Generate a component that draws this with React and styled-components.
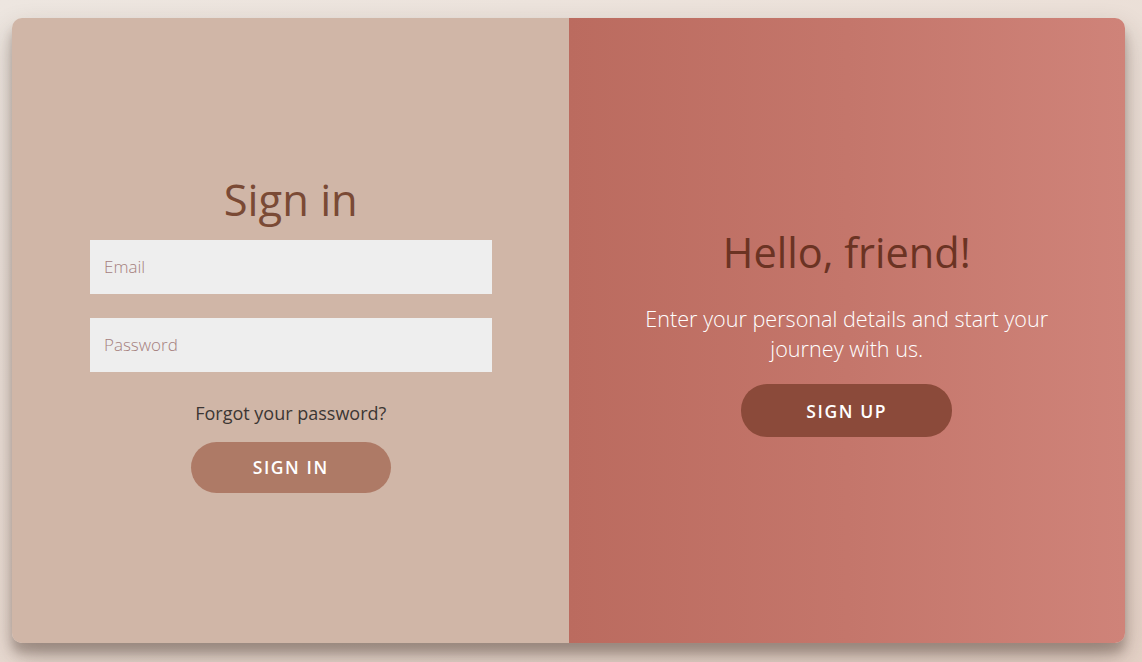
import styled, { createGlobalStyle } from 'styled-components'

const GlobalStyle = createGlobalStyle`
  * { box-sizing: border-box; }
  html, body {
    margin: 0;
    padding: 0;
    height: 100%;
  }
  body {
    font-family: "Open Sans", "Noto Sans", sans-serif;
    background: linear-gradient(160deg, #ede6e0 0%, #eadcd3 60%, #e6d3c8 100%);
  }
`;

const Page = styled.div`
  width: 1142px;
  height: 662px;
  padding: 18px 17px 19px 12px;
`;

const Container = styled.div`
  display: grid;
  grid-template-columns: 1fr 1fr;
  height: 100%;
  border-radius: 10px;
  overflow: hidden;
  box-shadow: 0 14px 28px rgba(60, 40, 30, 0.3), 0 10px 10px rgba(60, 40, 30, 0.25);
`;

const Panel = styled.div`
  display: flex;
  flex-direction: column;
  align-items: center;
  justify-content: center;
  text-align: center;
  padding: ${p => p.$pad || '0'};
  background: ${p => p.$bg};
`;

const Title = styled.h1`
  margin: 0 0 ${p => p.$gap || '0'};
  font-size: ${p => p.$size || '42px'};
  font-weight: 400;
  line-height: 1.3;
  color: ${p => p.$color};
`;

const Form = styled.form`
  display: flex;
  flex-direction: column;
  align-items: center;
  width: 100%;
`;

const Input = styled.input`
  width: 100%;
  height: 54px;
  margin-bottom: ${p => p.$mb || '24px'};
  border: none;
  outline: none;
  background: #eeeeee;
  padding: 0 14px;
  font-family: "Open Sans", sans-serif;
  font-size: 17px;
  font-weight: 300;
  color: #444;

  &::placeholder {
    color: #a5807d;
  }
`;

const Forgot = styled.a`
  margin-top: 29px;
  font-size: 18px;
  line-height: 24px;
  color: #3c3634;
  text-decoration: none;
`;

const Button = styled.button`
  width: ${p => p.$w};
  height: ${p => p.$h};
  margin-top: ${p => p.$mt || '0'};
  border: none;
  border-radius: 26px;
  background: ${p => p.$bg};
  color: #fff;
  font-family: "Open Sans", sans-serif;
  font-size: 17.5px;
  font-weight: 600;
  letter-spacing: 1.6px;
  text-transform: uppercase;
  cursor: pointer;
`;

const Text = styled.p`
  margin: 0 0 20px;
  max-width: 420px;
  font-size: 21.6px;
  font-weight: 300;
  line-height: 30px;
  color: #ffffff;
`;

export default function App() {
  return (
    <>
      <GlobalStyle />
      <Page>
        <Container>
          <Panel $bg="#d0b6a7" $pad="4px 77px 0 78px">
            <Title $color="#7a4a35" $size="43.5px" $gap="11px">Sign in</Title>
            <Form onSubmit={e => e.preventDefault()}>
              <Input type="email" placeholder="Email" />
              <Input type="password" placeholder="Password" $mb="0" />
              <Forgot href="#">Forgot your password?</Forgot>
              <Button $bg="#ae7a66" $w="200px" $h="51px" $mt="17px">Sign in</Button>
            </Form>
          </Panel>
          <Panel $bg="linear-gradient(90deg, #bb6b5f 0%, #c4766b 50%, #cf8379 100%)" $pad="2px 0 0">
            <Title $color="#6b3323" $size="41.5px" $gap="25px">Hello, friend!</Title>
            <Text>Enter your personal details and start your journey with us.</Text>
            <Button $bg="#8b4a3a" $w="211px" $h="53px">Sign up</Button>
          </Panel>
        </Container>
      </Page>
    </>
  )
}
